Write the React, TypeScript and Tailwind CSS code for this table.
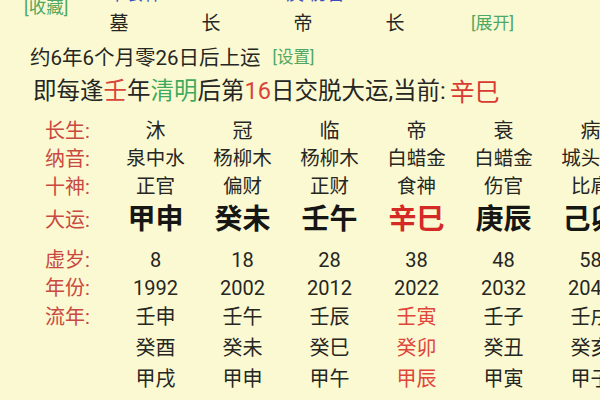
import React from "react";

const font = { fontFamily: 'Roboto, "Noto Sans CJK SC", sans-serif' };

type Col = {
  cs: string;
  ny: string;
  ss: string;
  dy: string;
  age: string;
  year: string;
  ln: string[];
  hl?: boolean;
};

const cols: Col[] = [
  { cs: "沐", ny: "泉中水", ss: "正官", dy: "甲申", age: "8", year: "1992", ln: ["壬申", "癸酉", "甲戌"] },
  { cs: "冠", ny: "杨柳木", ss: "偏财", dy: "癸未", age: "18", year: "2002", ln: ["壬午", "癸未", "甲申"] },
  { cs: "临", ny: "杨柳木", ss: "正财", dy: "壬午", age: "28", year: "2012", ln: ["壬辰", "癸巳", "甲午"] },
  { cs: "帝", ny: "白蜡金", ss: "食神", dy: "辛巳", age: "38", year: "2022", ln: ["壬寅", "癸卯", "甲辰"], hl: true },
  { cs: "衰", ny: "白蜡金", ss: "伤官", dy: "庚辰", age: "48", year: "2032", ln: ["壬子", "癸丑", "甲寅"] },
  { cs: "病", ny: "城头土", ss: "比肩", dy: "己卯", age: "58", year: "2042", ln: ["壬戌", "癸亥", "甲子"] },
];

function Row({
  label,
  h,
  children,
  extra = "",
}: {
  label?: string;
  h: string;
  children: React.ReactNode;
  extra?: string;
}) {
  return (
    <div className={`flex items-center ${h} ${extra}`}>
      <div className="w-[67px] shrink-0 text-[20px] leading-none text-[#c9483f]">{label ? `${label}:` : ""}</div>
      {children}
    </div>
  );
}

function Cell({ children, className = "" }: { children: React.ReactNode; className?: string }) {
  return <div className={`w-[87px] shrink-0 text-center leading-none whitespace-nowrap ${className}`}>{children}</div>;
}

export default function App() {
  return (
    <div className="w-[600px] h-[400px] overflow-hidden bg-[#fbf9d2] text-[#262622]" style={font}>
      {/* top fragment row */}
      <div className="flex h-[13px] items-start">
        <div className="pl-[24px] mt-[-1px] text-[17.5px] leading-[17px] text-[#4fa862] whitespace-nowrap">[收藏]</div>
        <div className="ml-[40px] mt-[-15px] text-[18px] leading-none text-[#3b4cc0] whitespace-nowrap">平食伴</div>
        <div className="ml-[124px] mt-[-15px] text-[18px] leading-none text-[#3b4cc0] whitespace-nowrap">庚 伤官</div>
      </div>
      {/* 墓 row */}
      <div className="flex h-[20px] items-center pl-[73px] text-[19px] leading-none">
        <div className="w-[92px] text-center">墓</div>
        <div className="w-[92px] text-center">长</div>
        <div className="w-[92px] text-center">帝</div>
        <div className="w-[92px] text-center">长</div>
        <div className="ml-[30px] text-[17px] text-[#4fa862] whitespace-nowrap">[展开]</div>
      </div>
      {/* line 3 */}
      <div className="mt-[11px] flex h-[28px] items-center pl-[30px] whitespace-nowrap">
        <span className="text-[20.5px] leading-none">约6年6个月零26日后上运</span>
        <span className="ml-[12px] text-[16.5px] leading-none text-[#4fa862]">[设置]</span>
      </div>
      {/* line 4 */}
      <div className="mt-[5px] flex h-[30px] items-center pl-[33px] whitespace-nowrap text-[23.5px] leading-none">
        <span>即每逢</span>
        <span className="text-[#d8463b]">壬</span>
        <span>年</span>
        <span className="text-[#3faa5c]">清明</span>
        <span>后第</span>
        <span className="text-[#d8463b]">16</span>
        <span>日交脱大运,当前: </span>
        <span className="ml-[4px] text-[25px] text-[#d83a32]">辛巳</span>
      </div>

      {/* table */}
      <div className="mt-[10px] pl-[45px]">
        <Row label="长生" h="h-[28px]">
          {cols.map((c, i) => (
            <Cell key={i} className="text-[20px]">{c.cs}</Cell>
          ))}
        </Row>
        <Row label="纳音" h="h-[28px]">
          {cols.map((c, i) => (
            <Cell key={i} className="text-[19.5px]">{c.ny}</Cell>
          ))}
        </Row>
        <Row label="十神" h="h-[28px]">
          {cols.map((c, i) => (
            <Cell key={i} className="text-[19.5px]">{c.ss}</Cell>
          ))}
        </Row>
        <Row label="大运" h="h-[38px]">
          {cols.map((c, i) => (
            <Cell key={i} className={`text-[28px] font-bold ${c.hl ? "text-[#d42a25]" : "text-[#161614]"}`}>
              {c.dy}
            </Cell>
          ))}
        </Row>
        <Row label="虚岁" h="h-[28px]" extra="mt-[7px]">
          {cols.map((c, i) => (
            <Cell key={i} className="text-[20px]">{c.age}</Cell>
          ))}
        </Row>
        <Row label="年份" h="h-[28px]">
          {cols.map((c, i) => (
            <Cell key={i} className="text-[20px]">{c.year}</Cell>
          ))}
        </Row>
        {[0, 1, 2].map((r) => (
          <Row key={r} label={r === 0 ? "流年" : undefined} h={r === 0 ? "h-[30px]" : "h-[31px]"}>
            {cols.map((c, i) => (
              <Cell key={i} className={`text-[20px] ${c.hl ? "text-[#e0453c]" : ""}`}>
                {c.ln[r]}
              </Cell>
            ))}
          </Row>
        ))}
      </div>
    </div>
  );
}
